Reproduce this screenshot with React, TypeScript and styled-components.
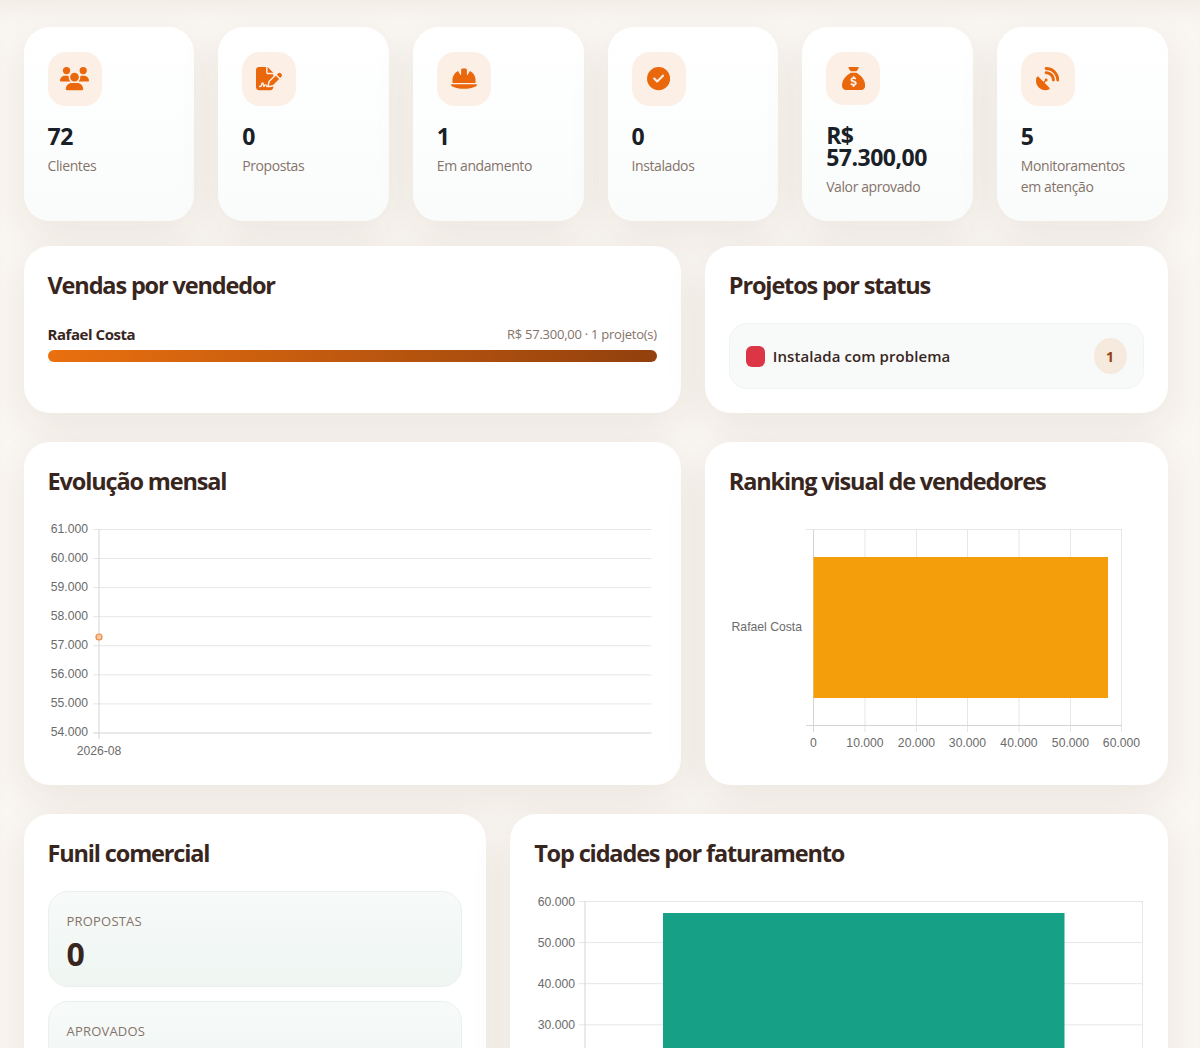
import React from 'react';
import styled, { createGlobalStyle } from 'styled-components';
import { FaUsers, FaFileSignature, FaHelmetSafety, FaCircleCheck, FaSackDollar, FaSatelliteDish } from 'react-icons/fa6';

const Global = createGlobalStyle`
  html, body { margin: 0; padding: 0; height: 1048px; overflow: hidden; }
  body { background: #faf6f1; font-family: "Open Sans", "Noto Sans", sans-serif; }
`;

const Page = styled.main`
  padding: 27px 32.5px 40px 23.5px;
  display: flex;
  flex-direction: column;
  box-shadow: inset 0 22px 24px -14px rgba(60, 40, 20, 0.05);
`;

const Grid = styled.section<{ $mb: number }>`
  display: grid;
  grid-template-columns: repeat(12, 1fr);
  gap: 24px;
  margin-bottom: ${p => p.$mb}px;
`;

const Card = styled.div<{ $span: number; $h: number }>`
  grid-column: span ${p => p.$span};
  height: ${p => p.$h}px;
  box-sizing: border-box;
  padding: 24px;
  border-radius: 26px;
  background: #fff;
  box-shadow: 0 14px 44px rgba(60, 40, 20, 0.08);
`;

const StatCard = styled(Card)`
  background: linear-gradient(180deg, #ffffff 0%, #fafcfc 100%);
  display: flex;
  flex-direction: column;
  padding-top: 25px;
`;

const IconBox = styled.div<{ $w: number }>`
  width: 54px;
  height: 54px;
  border-radius: 18px;
  background: #fcefe5;
  color: #ea670c;
  display: flex;
  align-items: center;
  justify-content: center;
  margin-bottom: 16px;
  svg { height: 23.2px; width: ${p => p.$w}px; }
`;

const StatValue = styled.div`
  font-size: 23px;
  line-height: 22px;
  font-weight: 700;
  color: #1a2027;
  padding: 3px 0 0;
  letter-spacing: -0.5px;
`;

const StatLabel = styled.div`
  font-size: 14px;
  line-height: 21px;
  color: #85736a;
  margin-top: 8px;
  letter-spacing: -0.4px;
`;

const Title = styled.h2`
  margin: 0;
  padding-bottom: 1px;
  font-size: 23.5px;
  line-height: 30px;
  font-weight: 700;
  letter-spacing: -1.15px;
  color: #38261e;
`;

const SellerHead = styled.div`
  display: flex;
  justify-content: space-between;
  align-items: center;
  margin-top: 23px;
`;

const SellerName = styled.span`
  font-size: 15px;
  font-weight: 700;
  color: #38261e;
  letter-spacing: -0.45px;
`;

const SellerInfo = styled.span`
  font-size: 13px;
  color: #85736a;
  letter-spacing: -0.25px;
`;

const Track = styled.div`
  margin-top: 6px;
  height: 12px;
  border-radius: 999px;
  background: linear-gradient(90deg, #ea700f 0%, #92400e 100%);
`;

const StatusRow = styled.div`
  margin-top: 22px;
  height: 66px;
  box-sizing: border-box;
  padding: 0 16px;
  border: 1px solid #f1f4f3;
  border-radius: 18px;
  background: #f8faf9;
  display: flex;
  align-items: center;
  gap: 8px;
`;

const StatusDot = styled.span`
  width: 19px;
  height: 21px;
  border-radius: 6px;
  background: #dc3545;
`;

const StatusName = styled.span`
  flex: 1;
  font-size: 15px;
  font-weight: 600;
  letter-spacing: 0.08px;
  color: #38261e;
`;

const Count = styled.span`
  width: 33px;
  height: 36px;
  border-radius: 50%;
  background: #f6e9dd;
  color: #92400e;
  font-size: 14px;
  font-weight: 700;
  display: flex;
  align-items: center;
  justify-content: center;
`;

const ChartFrame = styled.div`
  margin: 0 -24px;
  svg { display: block; overflow: visible; }
`;

const Funnel = styled.div`
  margin-top: 22px;
  display: flex;
  flex-direction: column;
  gap: 14px;
`;

const FunnelItem = styled.div`
  box-sizing: border-box;
  height: 96px;
  padding: 20px 18px;
  border: 1px solid #e9f1ee;
  border-radius: 20px;
  background: linear-gradient(180deg, #f7faf9 0%, #eff6f2 100%);
`;

const FunnelLabel = styled.div`
  font-size: 13px;
  line-height: 18px;
  color: #85736a;
  letter-spacing: 0.2px;
`;

const FunnelValue = styled.div`
  font-size: 32px;
  line-height: 36px;
  margin-top: 6px;
  font-weight: 700;
  color: #38261e;
`;

const axis = { fontFamily: '"Liberation Sans", Arial, sans-serif', fontSize: 12.2, fill: '#6b6b6b' };
const GRID = '#e6e6e6';
const AXIS = '#d4d4d4';

const LineChart = () => {
  const labels = ['61.000', '60.000', '59.000', '58.000', '57.000', '56.000', '55.000', '54.000'];
  return (
    <svg width={658} height={270} viewBox="24 497 658 270">
      {labels.map((l, i) => {
        const yy = 529.5 + i * 29.07;
        return (
          <g key={l}>
            <line x1={93} x2={651.5} y1={yy} y2={yy} stroke={i === 7 ? AXIS : GRID} />
            <text x={88} y={yy + 3.4} textAnchor="end" {...axis}>{l}</text>
          </g>
        );
      })}
      <line x1={99} x2={99} y1={529} y2={739} stroke={AXIS} />
      <circle cx={99} cy={637} r={3} fill="#f6c9a3" stroke="#ea8a4a" strokeWidth={1.2} />
      <text x={99} y={754.5} textAnchor="middle" {...axis}>2026-08</text>
    </svg>
  );
};

const RankingChart = () => {
  const xs = [813.5, 865, 916.5, 967.5, 1019, 1070.5, 1121.5];
  const ls = ['0', '10.000', '20.000', '30.000', '40.000', '50.000', '60.000'];
  return (
    <svg width={463} height={270} viewBox="705 497 463 270">
      {xs.map((x, i) => (
        <g key={x}>
          <line x1={x} x2={x} y1={529} y2={732} stroke={i === 0 ? AXIS : GRID} />
          <text x={x} y={747} textAnchor="middle" {...axis}>{ls[i]}</text>
        </g>
      ))}
      <line x1={806} x2={1122} y1={529.5} y2={529.5} stroke={GRID} />
      <line x1={806} x2={1122} y1={725.5} y2={725.5} stroke={AXIS} />
      <rect x={813.5} y={557} width={294.5} height={141} fill="#f59e0b" />
      <text x={802} y={631} textAnchor="end" {...axis}>Rafael Costa</text>
    </svg>
  );
};

const CitiesChart = () => {
  const ls = ['60.000', '50.000', '40.000', '30.000'];
  return (
    <svg width={658} height={280} viewBox="510 869 658 280">
      {ls.map((l, i) => {
        const yy = 901.5 + i * 41.1;
        return (
          <g key={l}>
            <line x1={579} x2={1142.5} y1={yy} y2={yy} stroke={GRID} />
            <text x={575} y={yy + 4} textAnchor="end" {...axis}>{l}</text>
          </g>
        );
      })}
      <line x1={585} x2={585} y1={901} y2={1146} stroke={AXIS} />
      <line x1={1142.5} x2={1142.5} y1={901} y2={1146} stroke={GRID} />
      <rect x={663} y={913} width={401.5} height={233} fill="#16a085" />
    </svg>
  );
};

const stats = [
  { icon: <FaUsers />, w: 29, value: '72', label: 'Clientes' },
  { icon: <FaFileSignature />, w: 26, value: '0', label: 'Propostas' },
  { icon: <FaHelmetSafety />, w: 26, value: '1', label: 'Em andamento' },
  { icon: <FaCircleCheck />, w: 23.2, value: '0', label: 'Instalados' },
  { icon: <FaSackDollar />, w: 23.2, value: 'R$ 57.300,00', label: 'Valor aprovado' },
  { icon: <FaSatelliteDish />, w: 23.2, value: '5', label: 'Monitoramentos em atenção' },
];

export default function App() {
  return (
    <Page>
      <Global />
      <Grid $mb={25}>
        {stats.map(s => (
          <StatCard key={s.label} $span={2} $h={194}>
            <IconBox $w={s.w}>{s.icon}</IconBox>
            <StatValue>{s.value}</StatValue>
            <StatLabel>{s.label}</StatLabel>
          </StatCard>
        ))}
      </Grid>
      <Grid $mb={29}>
        <Card $span={7} $h={167}>
          <Title>Vendas por vendedor</Title>
          <SellerHead>
            <SellerName>Rafael Costa</SellerName>
            <SellerInfo>R$ 57.300,00 · 1 projeto(s)</SellerInfo>
          </SellerHead>
          <Track />
        </Card>
        <Card $span={5} $h={167}>
          <Title>Projetos por status</Title>
          <StatusRow>
            <StatusDot />
            <StatusName>Instalada com problema</StatusName>
            <Count>1</Count>
          </StatusRow>
        </Card>
      </Grid>
      <Grid $mb={29}>
        <Card $span={7} $h={343}>
          <Title>Evolução mensal</Title>
          <ChartFrame><LineChart /></ChartFrame>
        </Card>
        <Card $span={5} $h={343}>
          <Title>Ranking visual de vendedores</Title>
          <ChartFrame><RankingChart /></ChartFrame>
        </Card>
      </Grid>
      <Grid $mb={0}>
        <Card $span={5} $h={420}>
          <Title>Funil comercial</Title>
          <Funnel>
            <FunnelItem>
              <FunnelLabel>PROPOSTAS</FunnelLabel>
              <FunnelValue>0</FunnelValue>
            </FunnelItem>
            <FunnelItem>
              <FunnelLabel>APROVADOS</FunnelLabel>
            </FunnelItem>
          </Funnel>
        </Card>
        <Card $span={7} $h={420}>
          <Title>Top cidades por faturamento</Title>
          <ChartFrame><CitiesChart /></ChartFrame>
        </Card>
      </Grid>
    </Page>
  );
}
